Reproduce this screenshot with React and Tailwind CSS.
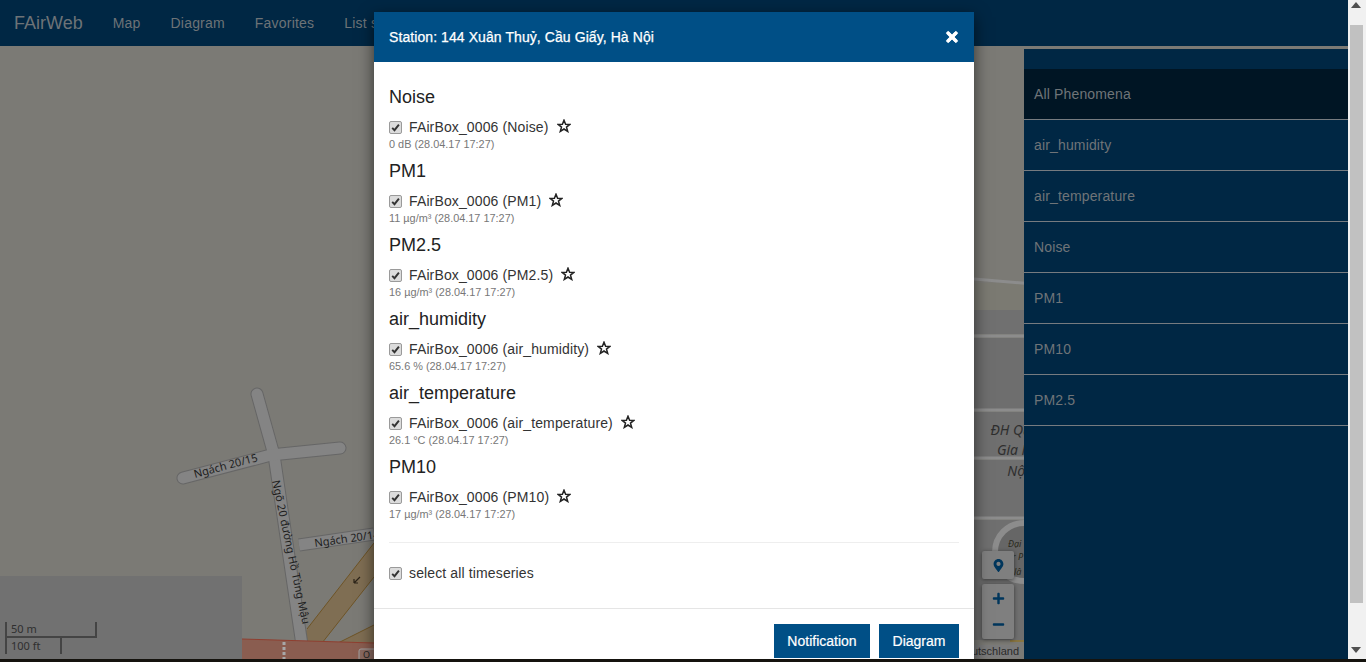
import React from "react";
import { FaTimes, FaPlus, FaMinus, FaMapMarkerAlt } from "react-icons/fa";

const sections = [
  ["Noise", "FAirBox_0006 (Noise)", "0 dB (28.04.17 17:27)"],
  ["PM1", "FAirBox_0006 (PM1)", "11 µg/m³ (28.04.17 17:27)"],
  ["PM2.5", "FAirBox_0006 (PM2.5)", "16 µg/m³ (28.04.17 17:27)"],
  ["air_humidity", "FAirBox_0006 (air_humidity)", "65.6 % (28.04.17 17:27)"],
  ["air_temperature", "FAirBox_0006 (air_temperature)", "26.1 °C (28.04.17 17:27)"],
  ["PM10", "FAirBox_0006 (PM10)", "17 µg/m³ (28.04.17 17:27)"],
];
const phenomena = ["air_humidity", "air_temperature", "Noise", "PM1", "PM10", "PM2.5"];
const nav = ["Map", "Diagram", "Favorites", "List selection"];

function Check() {
  return (
    <span className="flex h-[13px] w-[13px] shrink-0 items-center justify-center rounded-[2px] border border-[#9a9a9a] bg-[#dcdcdc]">
      <svg width="9" height="9" viewBox="0 0 9 9">
        <path d="M1.2 4.8 L3.5 7.2 L7.9 1.6" fill="none" stroke="#333" strokeWidth="1.9" />
      </svg>
    </span>
  );
}

function Star() {
  return (
    <svg width="14" height="14" viewBox="0 0 14 14" className="ml-[8px] mb-[2px]">
      <path d="M7 1.2 L8.6 5.2 L12.9 5.4 L9.5 8.1 L10.7 12.4 L7 10 L3.3 12.4 L4.5 8.1 L1.1 5.4 L5.4 5.2 Z" fill="none" stroke="#222" strokeWidth="1.5" />
    </svg>
  );
}

function MapDrawing() {
  return (
    <svg className="absolute inset-0 h-full w-full" viewBox="0 46 1348 613" preserveAspectRatio="none">
      <rect x="0" y="46" width="1348" height="613" fill="#7b7a75" />
      <rect x="0" y="576" width="242" height="83" fill="#717171" />
      <polygon points="307,629 374,543 374,577 322,643 301,643" fill="#7f6e53" />
      <polygon points="338,643 374,625 374,643" fill="#7f6e53" />
      <path d="M307 629 L374 543 M322 643 L374 577 M338 643 L374 625" stroke="#6e5426" strokeWidth="1" fill="none" />
      <g fill="none" strokeLinecap="round">
        <path d="M257 394 L274 455 L302 645" stroke="#666" strokeWidth="13" />
        <path d="M183 478 L271 455 L340 448" stroke="#666" strokeWidth="13" />
        <path d="M299 545 L374 534" stroke="#666" strokeWidth="13" strokeLinecap="butt" />
        <path d="M257 394 L274 455 L302 645" stroke="#848484" strokeWidth="11" />
        <path d="M183 478 L271 455 L340 448" stroke="#848484" strokeWidth="11" />
        <path d="M299 545 L374 534" stroke="#848484" strokeWidth="11" strokeLinecap="butt" />
      </g>
      <polygon points="242,639 374,643 374,659 242,659" fill="#8a5d50" />
      <path d="M242 639 L374 643" stroke="#8f3f30" strokeWidth="1" />
      <path d="M284 642 V659" stroke="#a8a8a8" strokeWidth="3" strokeDasharray="3 2" />
      <rect x="359" y="649" width="18" height="13" rx="2" fill="#8a6a60" stroke="#a0a0a0" />
      <text x="363" y="658" fontFamily="'Noto Sans', sans-serif" fontSize="9" fill="#222">O</text>
      <path d="M360 577 L354 583 M354 583 L354 579 M354 583 L358 583" stroke="#2b2318" strokeWidth="1.2" fill="none" />
      <g fontFamily="'Noto Sans', sans-serif" fontSize="11" fill="#1d1d1d">
        <text transform="translate(195,478) rotate(-15)">Ngách 20/15</text>
        <text transform="translate(272,481) rotate(78)">Ngõ 20 đường Hồ Tùng Mậu</text>
        <text transform="translate(315,547) rotate(-8)">Ngách 20/14</text>
      </g>
      <rect x="974" y="283" width="60" height="27" fill="#7b7a72" />
      <rect x="974" y="310" width="60" height="24" fill="#707070" />
      <rect x="974" y="338" width="60" height="71" fill="#6e6e6e" />
      <rect x="974" y="412" width="60" height="45" fill="#6f6f6f" />
      <rect x="974" y="460" width="60" height="57" fill="#6f6f6f" />
      <rect x="974" y="520" width="60" height="120" fill="#6f6f6f" />
      <path d="M974 279 L1034 284 M974 336 H1034 M974 410 H1034 M974 458 H1034 M974 518 H1034" stroke="#8c8c8c" strokeWidth="3" />
      <circle cx="1024" cy="552" r="29" fill="#666" stroke="#8c8c8c" strokeWidth="6" />
      <path d="M1010 641 H1030" stroke="#8d7430" strokeWidth="1.5" />
      <g fontFamily="'Noto Sans', sans-serif" fontStyle="italic" fontSize="14" fill="#2e2e2e" textAnchor="middle">
        <text x="1018" y="435">ĐH Quốc</text>
        <text x="1018" y="455">Gia Hà</text>
        <text x="1018" y="476">Nội</text>
      </g>
      <g fontFamily="'Noto Sans', sans-serif" fontStyle="italic" fontSize="9" fill="#2a2a1c">
        <text x="1008" y="547">Đại</text>
        <text x="1012" y="560">r P</text>
        <text x="1014" y="575">lâ</text>
      </g>
    </svg>
  );
}

export default function App() {
  return (
    <div className="flex h-[662px] w-[1366px] flex-col overflow-hidden font-['Liberation_Sans',Arial,sans-serif]">
      <div className="flex h-[659px] min-h-0">
        <div className="relative flex w-[1348px] flex-col overflow-hidden">
          <header className="flex h-[46px] shrink-0 items-center bg-[#002744] pl-[14px] text-[14px] tracking-[0.2px] text-[#6d7377]">
            <span className="mr-[15px] text-[18px] tracking-normal">FAirWeb</span>
            {nav.map((n) => (
              <span key={n} className="px-[15px]">{n}</span>
            ))}
          </header>

          <div className="relative flex min-h-0 flex-1 justify-end pt-[3px]">
            <MapDrawing />

            <div className="absolute bottom-[0px] left-[5px] font-['Noto_Sans',sans-serif] text-[11px] leading-[16px] text-[#2f2f2f]">
              <div className="h-[16px] w-[92px] border-x-2 border-b-2 border-[#444] pl-[4px] leading-[14px]">50 m</div>
              <div className="mb-[5px] h-[16px] w-[57px] border-x-2 border-[#444] pl-[4px]">100 ft</div>
            </div>

            <div className="absolute bottom-[1px] right-[329px] bg-[#7a7a7a] text-[11px] leading-[13px] text-[#2a2a2a]">Deutschland</div>

            <div className="absolute left-[982px] top-[505px] flex w-[32px] flex-col gap-[5px] text-[#00365c]">
              <div className="flex h-[28px] items-center justify-center rounded-[2px] bg-[#7f7f7f] shadow-[0_1px_4px_rgba(0,0,0,0.5)]">
                <FaMapMarkerAlt size={13} />
              </div>
              <div className="flex h-[55px] flex-col items-center justify-around rounded-[2px] bg-[#7f7f7f] py-[1px] shadow-[0_1px_4px_rgba(0,0,0,0.5)]">
                <FaPlus size={13} />
                <FaMinus size={13} />
              </div>
            </div>

            <aside className="relative w-[324px] bg-[#002744] pt-[20px] text-[14px] tracking-[0.15px] text-[#6f7478]">
              <div className="flex h-[51px] items-center border-b border-[#767b80] bg-[#001524] pl-[10px]">All Phenomena</div>
              {phenomena.map((p) => (
                <div key={p} className="flex h-[51px] items-center border-b border-[#767b80] pl-[10px]">{p}</div>
              ))}
            </aside>
          </div>

          <div className="absolute left-[374px] top-[12px] h-[660px] w-[600px] bg-white shadow-[0_5px_15px_rgba(0,0,0,0.6)]">
            <div className="flex h-[50px] items-center justify-between bg-[#004f86] pl-[15px] pr-[14px] text-[14px] tracking-[0.08px] text-white [-webkit-text-stroke:0.25px_white]">
              <span>Station: 144 Xuân Thuỷ, Cầu Giấy, Hà Nội</span>
              <FaTimes size={16} stroke="white" strokeWidth={30} />
            </div>
            <div className="px-[15px] pt-[25px] text-[#333]">
              {sections.map(([title, label, value]) => (
                <section key={title} className="mb-[10px]">
                  <h4 className="mb-[10px] h-[20px] text-[18px] leading-[20px] text-[#222]">{title}</h4>
                  <div className="flex h-[20px] items-center text-[14px] tracking-[0.13px]">
                    <Check />
                    <span className="ml-[7px]">{label}</span>
                    <Star />
                  </div>
                  <div className="h-[14px] text-[10.9px] leading-[14px] text-[#777]">{value}</div>
                </section>
              ))}
              <hr className="mt-[21px] border-[#eeeeee]" />
              <div className="mt-[20px] flex h-[20px] items-center text-[14px] tracking-[0.13px]">
                <Check />
                <span className="ml-[7px]">select all timeseries</span>
              </div>
            </div>
            <div className="mt-[25px] flex justify-end gap-[9px] border-t border-[#e5e5e5] px-[15px] pt-[15px]">
              <button className="h-[34px] w-[96px] bg-[#004f86] text-[14px] text-white [-webkit-text-stroke:0.2px_white]">Notification</button>
              <button className="h-[34px] w-[80px] bg-[#004f86] text-[14px] text-white [-webkit-text-stroke:0.2px_white]">Diagram</button>
            </div>
          </div>
        </div>

        <div className="flex w-[18px] shrink-0 flex-col items-center bg-[#f1f1f1] pr-[2px]">
          <svg width="10" height="6" viewBox="0 0 10 6" className="mt-[2px]"><path d="M5 0 L10 6 H0 Z" fill="#505050" /></svg>
          <div className="mt-[17px] h-[578px] w-[13px] bg-[#c1c1c1]" />
          <svg width="10" height="6" viewBox="0 0 10 6" className="mt-[44px]"><path d="M0 0 H10 L5 6 Z" fill="#505050" /></svg>
        </div>
      </div>
      <div className="h-[3px] shrink-0 bg-[#15130e]" />
    </div>
  );
}
